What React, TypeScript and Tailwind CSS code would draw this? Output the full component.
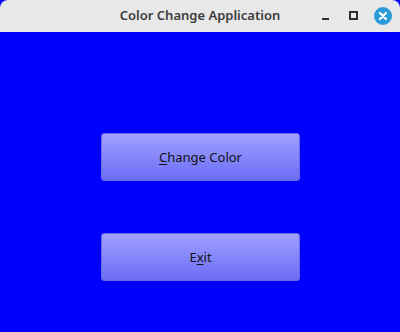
export default function App() {
  return (
    <div className="w-[400px] h-[332px] flex flex-col bg-[#0000ff] overflow-hidden" style={{ fontFamily: '"Noto Sans", "DejaVu Sans", sans-serif' }}>
      {/* title bar */}
      <div className="relative h-[32px] shrink-0 bg-[#e8e8e8] rounded-t-[8px] flex items-center justify-center">
        <span className="text-[13px] font-semibold text-[#3c3c3c]">Color Change Application</span>
        <div className="absolute right-[8px] top-0 h-[32px] flex items-center gap-[14px]">
          <svg width="14" height="14" viewBox="0 0 14 14">
            <rect x="4" y="9" width="7" height="2" fill="#2e2e2e" />
          </svg>
          <svg width="14" height="14" viewBox="0 0 14 14">
            <rect x="4" y="3" width="7" height="7" fill="none" stroke="#2e2e2e" strokeWidth="2" />
          </svg>
          <svg width="18" height="18" viewBox="0 0 18 18">
            <circle cx="9" cy="9" r="9" fill="#2a9bd9" />
            <path d="M6 6 L12 12 M12 6 L6 12" stroke="#fff" strokeWidth="2.2" strokeLinecap="round" />
          </svg>
        </div>
      </div>

      {/* content */}
      <div className="flex-1 flex flex-col items-center pt-[101px] gap-[52px] pl-px">
        <button className="w-[199px] h-[48px] rounded-[3px] border border-[#6a6ae6] bg-gradient-to-b from-[#a0a0ff] to-[#6c6cf4] text-[13px] text-[#111] pt-[1px]">
          <span className="underline underline-offset-2">C</span>hange Color
        </button>
        <button className="w-[199px] h-[48px] rounded-[3px] border border-[#6a6ae6] bg-gradient-to-b from-[#a0a0ff] to-[#6c6cf4] text-[13px] text-[#111] pt-[1px]">
          E<span className="underline underline-offset-2">x</span>it
        </button>
      </div>
    </div>
  );
}
